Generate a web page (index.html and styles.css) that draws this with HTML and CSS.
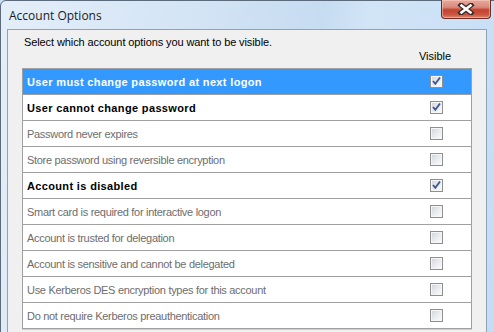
FILE: index.html
```html
<!DOCTYPE html>
<html>
<head>
<meta charset="utf-8">
<link rel="stylesheet" href="styles.css">
</head>
<body>
<div class="window">
  <div class="titlebar">
    <span class="title">Account Options</span>
    <div class="close">
      <svg width="20" height="12" viewBox="0 0 20 12">
        <path d="M5 2 L15 10 M15 2 L5 10" stroke="#3a2a28" stroke-width="5" stroke-linecap="square" fill="none"/>
        <path d="M5.5 2.5 L14.5 9.5 M14.5 2.5 L5.5 9.5" stroke="#ffffff" stroke-width="2.6" stroke-linecap="square" fill="none"/>
      </svg>
    </div>
  </div>
  <div class="client">
    <p class="intro">Select which account options you want to be visible.</p>
    <div class="header"><span class="visible">Visible</span></div>
    <div class="table">
      <div class="row selected strong"><span class="label">User must change password at next logon</span><span class="cb checked"></span></div>
      <div class="row strong"><span class="label">User cannot change password</span><span class="cb checked"></span></div>
      <div class="row"><span class="label">Password never expires</span><span class="cb"></span></div>
      <div class="row"><span class="label">Store password using reversible encryption</span><span class="cb"></span></div>
      <div class="row strong"><span class="label">Account is disabled</span><span class="cb checked"></span></div>
      <div class="row"><span class="label">Smart card is required for interactive logon</span><span class="cb"></span></div>
      <div class="row"><span class="label">Account is trusted for delegation</span><span class="cb"></span></div>
      <div class="row"><span class="label">Account is sensitive and cannot be delegated</span><span class="cb"></span></div>
      <div class="row"><span class="label">Use Kerberos DES encryption types for this account</span><span class="cb"></span></div>
      <div class="row"><span class="label">Do not require Kerberos preauthentication</span><span class="cb"></span></div>
    </div>
  </div>
</div>
</body>
</html>
```
FILE: styles.css
```css
html, body {
  margin: 0;
  padding: 0;
  width: 494px;
  height: 332px;
  overflow: hidden;
  background: #c9def3;
}
.window {
  width: 500px;
  height: 360px;
  box-sizing: border-box;
  border: 1px solid #5b6b7c;
  border-top-left-radius: 6px;
  background: linear-gradient(100deg, #e4eef9 0%, #d3e4f5 35%, #c6dcf1 58%, #d2e5f7 66%, #c3dcf4 100%);
  display: flex;
  flex-direction: column;
}
.titlebar {
  height: 28px;
  display: flex;
  align-items: flex-start;
  position: relative;
}
.title {
  font-family: "Open Sans", "Noto Sans", sans-serif;
  font-size: 12px;
  color: #1b1b1b;
  margin: 7px 0 0 8px;
  line-height: 16px;
}
.close {
  position: absolute;
  left: 440px;
  top: -1px;
  width: 50px;
  height: 19px;
  box-sizing: border-box;
  border: 1px solid #6a2d25;
  border-top: none;
  border-radius: 0 0 4px 4px;
  background: linear-gradient(to bottom, #e9a99b 0%, #d88a7c 40%, #c2432f 55%, #c9553f 80%, #e0846c 100%);
  box-shadow: inset 0 0 0 1px rgba(255,220,210,0.45);
  display: flex;
  align-items: center;
  justify-content: center;
}
.client {
  margin-left: 6px;
  width: 480px;
  flex: 1;
  box-sizing: border-box;
  border: 1px solid #8fa3b8;
  background: #f0f0f0;
  font-family: "Liberation Sans", Arial, sans-serif;
  font-size: 11px;
}
.intro {
  margin: 6px 0 0 16px;
  line-height: 13px;
  color: #000;
  letter-spacing: -0.1px;
}
.header {
  display: flex;
  justify-content: flex-end;
  margin: 1px 0 0 0;
  height: 13px;
}
.visible {
  width: 40px;
  margin-right: 31px;
  text-align: center;
  line-height: 13px;
  color: #000;
}
.table {
  margin: 5px 0 0 14px;
  width: 450px;
  box-sizing: border-box;
  border: 1px solid #a0a0a0;
  border-bottom: none;
  background: #fff;
  box-shadow: 0 1px 0 #cfcfcf;
}
.row {
  height: 25px;
  border-bottom: 1px solid #a0a0a0;
  display: flex;
  align-items: center;
  justify-content: space-between;
  padding: 0 28px 0 4px;
  color: #6d6d6d;
  letter-spacing: -0.3px;
}
.row.strong {
  font-weight: bold;
  color: #000;
  letter-spacing: 0.35px;
}
.row.selected {
  background: #3399ff;
  color: #fff;
}
.cb {
  width: 13px;
  height: 13px;
  box-sizing: border-box;
  border: 1px solid #8e8f8f;
  background: linear-gradient(135deg, #cfd4da 0%, #e9ebee 50%, #fdfdfd 100%);
  box-shadow: inset 0 0 0 1px #f6f6f6;
}
.cb.checked {
  background-color: #f4f4f4;
  background-image: url("data:image/svg+xml;utf8,<svg xmlns='http://www.w3.org/2000/svg' width='11' height='11' viewBox='0 0 11 11'><path d='M2 5 L4.3 7.8 L9 1.5' stroke='%233c5396' stroke-width='1.8' fill='none'/></svg>"), linear-gradient(135deg, #cfd4da 0%, #e9ebee 50%, #fdfdfd 100%);
  background-repeat: no-repeat;
  background-position: center;
}
```
